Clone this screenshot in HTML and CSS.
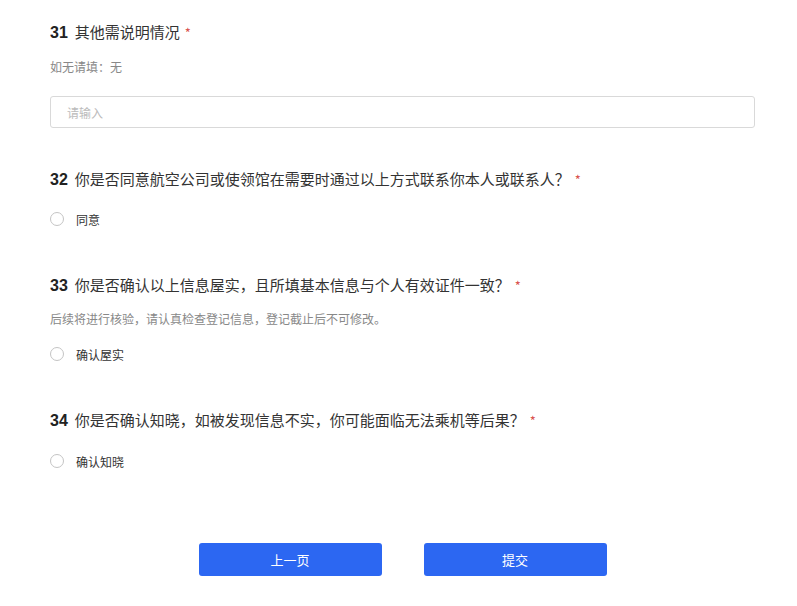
FILE: index.html
```html
<!DOCTYPE html>
<html>
<head>
    <title>登记信息</title>
    <link rel="stylesheet" href="styles.css">
</head>
<body>
    <div class="container">
        <form id="infoForm">
            <div class="question">
                <div class="title"><span class="num">31</span>其他需说明情况<span class="req">*</span></div>
                <div class="desc">如无请填：无</div>
                <input type="text" class="text-input" placeholder="请输入">
            </div>

            <div class="question question-choice">
                <div class="title"><span class="num">32</span>你是否同意航空公司或使领馆在需要时通过以上方式联系你本人或联系人？<span class="req">*</span></div>
                <label class="option"><span class="radio"></span>同意</label>
            </div>

            <div class="question question-choice">
                <div class="title"><span class="num">33</span>你是否确认以上信息屋实，且所填基本信息与个人有效证件一致？<span class="req">*</span></div>
                <div class="desc desc-tight">后续将进行核验，请认真检查登记信息，登记截止后不可修改。</div>
                <label class="option"><span class="radio"></span>确认屋实</label>
            </div>

            <div class="question question-choice">
                <div class="title"><span class="num">34</span>你是否确认知晓，如被发现信息不实，你可能面临无法乘机等后果？<span class="req">*</span></div>
                <label class="option option-loose"><span class="radio"></span>确认知晓</label>
            </div>

            <div class="actions">
                <button type="button" class="btn">上一页</button>
                <button type="submit" class="btn">提交</button>
            </div>
        </form>
    </div>
</body>
</html>
```

FILE: styles.css
```css
body {
    font-family: "Noto Sans CJK SC", "Liberation Sans", sans-serif;
    background-color: #fff;
    color: #333;
    margin: 0;
}
.container {
    width: 705px;
    padding: 21px 0 0 50px;
}
.question {
    margin-bottom: 40px;
}
.question-choice {
    margin-bottom: 45px;
}
.title {
    font-size: 15px;
    line-height: 22px;
    color: #333;
    margin-bottom: 18px;
}
.num {
    font-family: "Liberation Sans", sans-serif;
    font-weight: bold;
    font-size: 16px;
    color: #222;
    margin-right: 7px;
}
.req {
    color: #d9534f;
    font-size: 13px;
    margin-left: 5px;
}
.desc {
    font-size: 12px;
    line-height: 18px;
    color: #888;
    margin-top: -4px;
    margin-bottom: 20px;
}
.desc-tight {
    margin-top: -5px;
    margin-bottom: 16px;
}
.text-input {
    display: block;
    width: 100%;
    height: 32px;
    padding: 0 16px;
    border: 1px solid #d9d9d9;
    border-radius: 3px;
    box-sizing: border-box;
    font-family: inherit;
    font-size: 12px;
    color: #333;
    outline: none;
}
.text-input::placeholder {
    color: #bbb;
}
.option {
    display: flex;
    align-items: center;
    height: 20px;
    font-size: 12px;
    color: #333;
    cursor: pointer;
}
.option-loose {
    margin-top: 19px;
}
.radio {
    width: 12px;
    height: 12px;
    border: 1px solid #c4c4c4;
    border-radius: 50%;
    margin-right: 12px;
}
.actions {
    display: flex;
    justify-content: center;
    gap: 42px;
    margin-top: 72px;
}
.btn {
    width: 183px;
    height: 33px;
    background-color: #2c67f2;
    color: #fff;
    border: none;
    border-radius: 3px;
    font-family: inherit;
    font-size: 13px;
    cursor: pointer;
}
.btn:hover {
    background-color: #255ad9;
}
```
